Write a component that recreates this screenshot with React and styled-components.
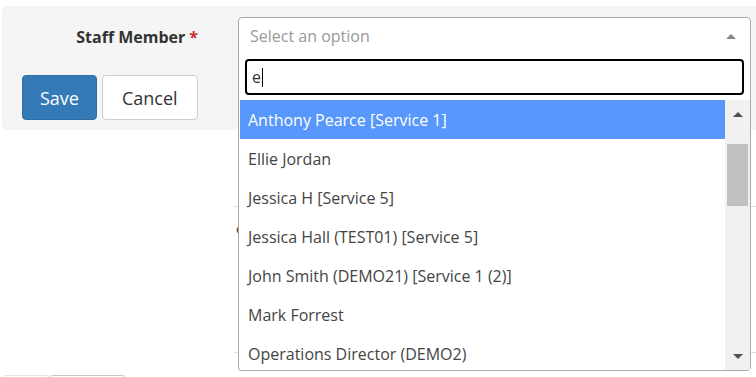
import React from 'react';
import styled, { createGlobalStyle } from 'styled-components';

const GlobalStyle = createGlobalStyle`
  html, body {
    margin: 0;
    padding: 0;
    overflow: hidden;
    background: #fff;
  }
  body {
    font-family: "Open Sans", "Noto Sans", sans-serif;
    color: #333;
  }
`;

const Page = styled.div`
  padding: 6px 0 0 2px;
  width: 780px;
`;

const Panel = styled.div`
  background: #f5f5f5;
  border-radius: 4px;
  height: 124px;
  padding: 11px 0 0 0;
  box-sizing: border-box;
`;

const FieldRow = styled.div`
  display: flex;
  align-items: center;
`;

const Label = styled.label`
  width: 196px;
  text-align: right;
  font-size: 16px;
  font-weight: 700;
  color: #333;
  margin-right: 40px;
  padding-top: 2px;
`;

const Required = styled.span`
  color: #c9302c;
  margin-left: 4px;
`;

const SelectWrap = styled.div`
  position: relative;
  width: 513px;
`;

const SelectBox = styled.div`
  height: 37px;
  box-sizing: border-box;
  border: 1px solid #aaa;
  border-radius: 4px 4px 0 0;
  background: #fff;
  display: flex;
  align-items: center;
  justify-content: space-between;
  padding: 1px 14px 0 11px;
  font-size: 16px;
  color: #999;
`;

const Caret = styled.span`
  width: 0;
  height: 0;
  border-left: 5px solid transparent;
  border-right: 5px solid transparent;
  border-${p => (p.down ? 'top' : 'bottom')}: 5px solid ${p => p.color || '#888'};
`;

const Dropdown = styled.div`
  position: absolute;
  top: 36px;
  left: 0;
  width: 513px;
  box-sizing: border-box;
  background: #fff;
  border: 1px solid #aaa;
  border-top: none;
  border-radius: 0 0 4px 4px;
  z-index: 10;
`;

const Search = styled.div`
  margin: 6px 6px 5px 6px;
  height: 36px;
  box-sizing: border-box;
  border: 2px solid #000;
  border-radius: 4px;
  display: flex;
  align-items: center;
  padding-left: 5px;
  font-size: 16px;
  color: #333;
`;

const Cursor = styled.span`
  display: inline-block;
  width: 1px;
  height: 19px;
  background: #000;
  margin-left: 1px;
`;

const Results = styled.div`
  display: flex;
  height: 270px;
  overflow: hidden;
`;

const List = styled.ul`
  list-style: none;
  margin: 0;
  padding: 0 0 0 1px;
  flex: 1;
`;

const Option = styled.li`
  height: 39px;
  display: flex;
  align-items: center;
  padding-left: 8px;
  font-size: 16px;
  white-space: nowrap;
  background: ${p => (p.active ? '#5897fb' : '#fff')};
  color: ${p => (p.active ? '#fff' : '#444')};
`;

const Scrollbar = styled.div`
  width: 25px;
  background: #f1f1f1;
  display: flex;
  flex-direction: column;
  align-items: center;
`;

const ScrollArrow = styled.div`
  height: 28px;
  display: flex;
  align-items: center;
  justify-content: center;
`;

const Thumb = styled.div`
  width: 21px;
  height: 62px;
  margin-top: 16px;
  background: #c1c1c1;
`;

const Spacer = styled.div`
  flex: 1;
`;

const ButtonRow = styled.div`
  display: flex;
  gap: 5px;
  margin: 21px 0 0 20px;
`;

const Button = styled.button`
  height: 45px;
  box-sizing: border-box;
  padding: 0 ${p => (p.primary ? 17 : 19)}px;
  font-family: "Open Sans", sans-serif;
  font-size: 18px;
  border-radius: 4px;
  border: 1px solid ${p => (p.primary ? '#2e6da4' : '#ccc')};
  background: ${p => (p.primary ? '#337ab7' : '#fff')};
  color: ${p => (p.primary ? '#fff' : '#333')};
`;

const Behind = styled.div`
  margin: 76px 0 0 232px;
  border-top: 1px solid #ddd;
  border-bottom: 1px solid #ddd;
  height: 147px;
  box-sizing: border-box;
  display: flex;
  justify-content: space-between;
  padding: 12px 0 0 2px;
  font-size: 14px;
`;

const Cell = styled.span`
  color: ${p => p.color || '#333'};
`;

const Tabs = styled.div`
  display: flex;
  margin: 22px 0 0 1px;
`;

const Tab = styled.div`
  width: ${p => p.w}px;
  height: 10px;
  border-top: 1px solid ${p => p.dark ? '#c8c8c8' : '#e2e2e2'};
  border-radius: 3px 3px 0 0;
`;

const options = [
  'Anthony Pearce [Service 1]',
  'Ellie Jordan',
  'Jessica H [Service 5]',
  'Jessica Hall (TEST01) [Service 5]',
  'John Smith (DEMO21) [Service 1 (2)]',
  'Mark Forrest',
  'Operations Director (DEMO2)',
];

export default function App() {
  return (
    <>
      <GlobalStyle />
      <Page>
        <Panel>
          <FieldRow>
            <Label>
              Staff Member<Required>*</Required>
            </Label>
            <SelectWrap>
              <SelectBox>
                Select an option
                <Caret />
              </SelectBox>
              <Dropdown>
                <Search>
                  e<Cursor />
                </Search>
                <Results>
                  <List>
                    {options.map((o, i) => (
                      <Option key={o} active={i === 0}>{o}</Option>
                    ))}
                  </List>
                  <Scrollbar>
                    <ScrollArrow><Caret color="#505050" /></ScrollArrow>
                    <Thumb />
                    <Spacer />
                    <ScrollArrow><Caret down color="#505050" /></ScrollArrow>
                  </Scrollbar>
                </Results>
              </Dropdown>
            </SelectWrap>
          </FieldRow>
          <ButtonRow>
            <Button primary>Save</Button>
            <Button>Cancel</Button>
          </ButtonRow>
        </Panel>
        <Behind>
          <Cell>e</Cell>
          <Cell color="#e08a2c">Edit</Cell>
        </Behind>
        <Tabs>
          <Tab w={47} />
          <Tab w={75} dark />
        </Tabs>
      </Page>
    </>
  );
}
